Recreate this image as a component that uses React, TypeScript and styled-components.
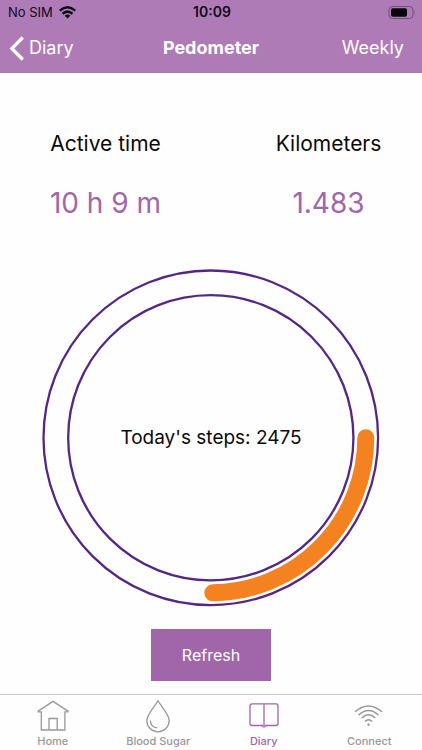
import React from "react";
import styled, { createGlobalStyle } from "styled-components";

const purple = "#a166aa";
const headerPurple = "#af7bb7";
const grey = "#98989a";

const GlobalStyle = createGlobalStyle`
  *, *::before, *::after { box-sizing: border-box; }
  body {
    margin: 0;
    background: #fefefe;
    color: #0a0a0a;
    font-family: Inter, "Liberation Sans", sans-serif;
  }
  button { font-family: inherit; }
`;

const Screen = styled.div`
  display: flex;
  flex-direction: column;
  min-height: 100vh;
`;

const Header = styled.header`
  background: ${headerPurple};
  border-bottom: 1px solid #a87bb0;
`;

const StatusBar = styled.div`
  display: grid;
  grid-template-columns: 1fr auto 1fr;
  align-items: center;
  height: 24px;
  padding: 0 6px 0 8px;
  font-size: 13px;
  line-height: 16px;
  color: #10091a;
`;

const Carrier = styled.div`
  display: flex;
  align-items: center;
  gap: 6px;
`;

const Clock = styled.time`
  font-size: 14px;
  font-weight: 600;
`;

const BatteryIcon = styled.svg`
  justify-self: end;
`;

const NavBar = styled.nav`
  display: grid;
  grid-template-columns: 1fr auto 1fr;
  align-items: center;
  height: 48px;
  padding: 0 9px;
  color: #fff;
`;

const NavLink = styled.a<{ $end?: boolean }>`
  display: flex;
  align-items: center;
  gap: 4px;
  justify-self: ${(p) => (p.$end ? "end" : "start")};
  padding-right: ${(p) => (p.$end ? "9px" : "0")};
  color: #fff;
  font-size: 18px;
  line-height: 24px;
  text-decoration: none;
`;

const Title = styled.h1`
  margin: 0;
  font-size: 18px;
  line-height: 24px;
  font-weight: 700;
`;

const Main = styled.main`
  display: flex;
  flex: 1;
  flex-direction: column;
  align-items: center;
  padding: 58px 0 13px;
`;

const Stats = styled.dl`
  display: grid;
  grid-template-columns: 1fr 1fr;
  align-self: stretch;
  margin: 0;
`;

const Stat = styled.div<{ $inset?: boolean }>`
  padding-left: ${(p) => (p.$inset ? "24px" : "0")};
  text-align: center;
`;

const StatLabel = styled.dt`
  font-size: 21px;
  line-height: 26px;
`;

const StatValue = styled.dd`
  margin: 28px 0 0;
  color: ${purple};
  font-size: 28px;
  line-height: 36px;
`;

const Dial = styled.div`
  display: grid;
  place-items: center;
  width: 80%;
  max-width: 420px;
  margin: 48px 0 20px;

  > * { grid-area: 1 / 1; }
  > svg { display: block; width: 100%; }
`;

const Steps = styled.p`
  margin: 0;
  font-size: 19px;
  line-height: 24px;
`;

const RefreshButton = styled.button`
  width: 120px;
  height: 52px;
  margin-top: auto;
  padding: 0;
  border: 0;
  background: ${purple};
  color: #fff;
  font-size: 16px;
  line-height: 24px;
`;

const TabBar = styled.nav`
  display: grid;
  grid-template-columns: repeat(4, 1fr);
  height: 56px;
  border-top: 1px solid #c6c6c6;
`;

const Tab = styled.a<{ $active?: boolean }>`
  display: flex;
  flex-direction: column;
  align-items: center;
  padding-top: 4px;
  color: ${(p) => (p.$active ? purple : grey)};
  font-size: 11px;
  font-weight: 500;
  line-height: 16px;
  text-decoration: none;

  > svg { flex: none; }
`;

const TabIcon = ({ children }: { children: React.ReactNode }) => (
  <svg width="34" height="34" viewBox="0 0 34 34" fill="none" stroke="currentColor" strokeWidth="1.3" aria-hidden="true">
    {children}
  </svg>
);

const tabs = [
  {
    label: "Home",
    icon: (
      <>
        <path d="M2.5 11.9 17 2.4l14.5 9.5" />
        <path d="M2.300 11v1.800h3V31h23.600V12.800h3V11" />
        <path d="M13 31V19.500h8.200V31" />
      </>
    ),
  },
  {
    label: "Blood Sugar",
    icon: (
      <>
        <path d="M17 1.800C13.400 8.200 5.800 15.400 5.800 21.600a11.200 11.200 0 0 0 22.400 0C28.200 15.400 20.600 8.200 17 1.800z" />
        <path d="M9.300 21.500c.2 4 2.800 7 7 7.400" />
      </>
    ),
  },
  {
    label: "Diary",
    active: true,
    icon: (
      <>
        <path d="M5 4.900h24a2 2 0 0 1 2 2v17.600a2 2 0 0 1-2 2H18.600q-.3 1.600-1.600 1.600t-1.600-1.600H5a2 2 0 0 1-2-2V6.900a2 2 0 0 1 2-2z" />
        <path d="M17 5v22" />
      </>
    ),
  },
  {
    label: "Connect",
    icon: (
      <>
        <path strokeWidth="1.500" d="M3 12.800q13.500-11.600 27 0M6.500 16q10-9 20 0M9.800 19q6.700-6.400 13.400 0M13 22.600q3.500-3.600 7 0" />
        <circle cx="16.500" cy="25.800" r="1.200" fill="currentColor" stroke="none" />
      </>
    ),
  },
];

export default function App() {
  return (
    <Screen>
      <GlobalStyle />
      <Header>
        <StatusBar>
          <Carrier>
            No SIM
            <svg width="17" height="13" viewBox="0 0 17 13" fill="none" stroke="currentColor" strokeWidth="2.500" aria-label="Wi-Fi">
              <path d="M.8 4.600q7.700-6.600 15.400 0M3.500 7.800q5-4.400 10 0" />
              <path d="M8.500 12.500 5.700 9.700q2.800-2.200 5.600 0z" fill="currentColor" stroke="none" />
            </svg>
          </Carrier>
          <Clock>10:09</Clock>
          <BatteryIcon width="28" height="13" viewBox="0 0 28 13" aria-label="Battery">
            <rect x="1" y="0.500" width="24" height="12" rx="3.500" fill="none" stroke="#70507a" />
            <rect x="3" y="2.300" width="16" height="8.400" rx="1.800" fill="#08040c" />
            <path d="M26.300 4.300q1.600 2.200 0 4.400z" fill="#70507a" />
          </BatteryIcon>
        </StatusBar>
        <NavBar>
          <NavLink href="#diary">
            <svg width="16" height="25" viewBox="0 0 16 25" fill="none" stroke="currentColor" strokeWidth="3.200" aria-hidden="true">
              <path d="M13.800 1.500 2.800 12.500l11 11" />
            </svg>
            Diary
          </NavLink>
          <Title>Pedometer</Title>
          <NavLink href="#weekly" $end>Weekly</NavLink>
        </NavBar>
      </Header>

      <Main>
        <Stats>
          <Stat>
            <StatLabel>Active time</StatLabel>
            <StatValue>10 h 9 m</StatValue>
          </Stat>
          <Stat $inset>
            <StatLabel>Kilometers</StatLabel>
            <StatValue>1.483</StatValue>
          </Stat>
        </Stats>

        <Dial>
          <svg viewBox="0 0 338 338" fill="none" aria-hidden="true">
            <circle cx="169" cy="169" r="167.500" stroke="#552785" strokeWidth="2.300" />
            <circle cx="169" cy="169" r="142.800" stroke="#552785" strokeWidth="2.300" />
            <path d="M324.200 169A155.200 155.200 0 0 1 171 324.200" stroke="#f58220" strokeWidth="17" strokeLinecap="round" />
          </svg>
          <Steps>Today's steps: 2475</Steps>
        </Dial>

        <RefreshButton type="button">Refresh</RefreshButton>
      </Main>

      <TabBar aria-label="Sections">
        {tabs.map((tab) => (
          <Tab key={tab.label} href="#" $active={tab.active} aria-current={tab.active ? "page" : undefined}>
            <TabIcon>{tab.icon}</TabIcon>
            {tab.label}
          </Tab>
        ))}
      </TabBar>
    </Screen>
  );
}
